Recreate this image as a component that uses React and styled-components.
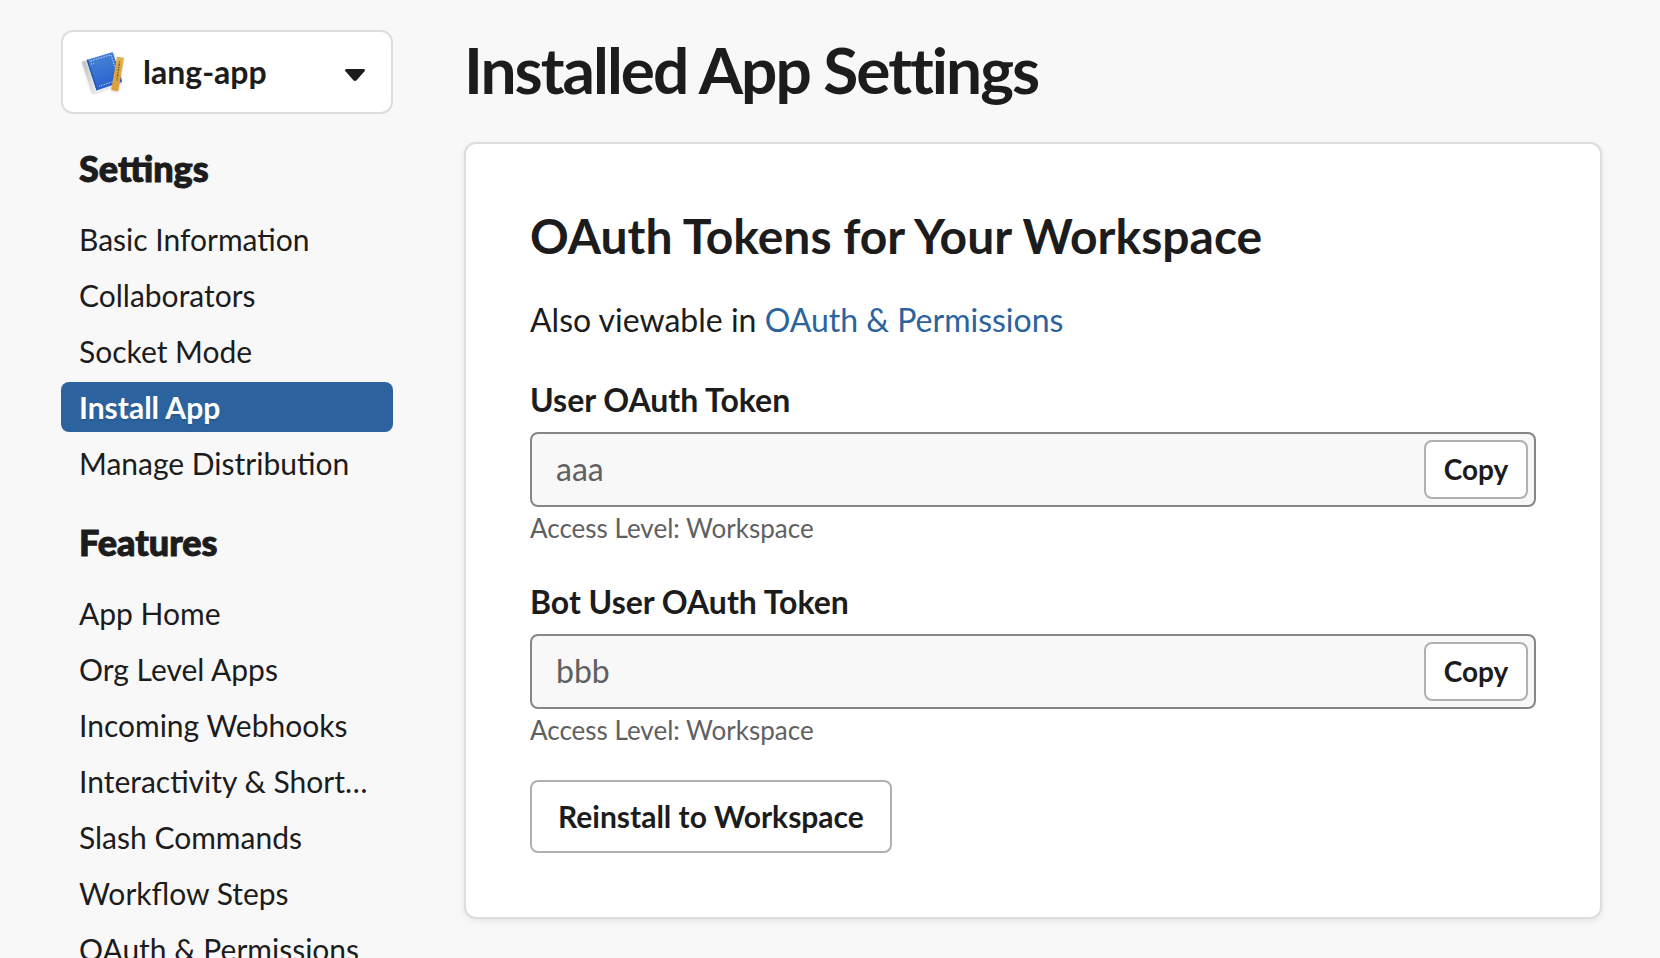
import React from "react";
import styled, { createGlobalStyle, css } from "styled-components";

const GlobalStyle = createGlobalStyle`
  *, *::before, *::after { box-sizing: border-box; }
  html { scrollbar-width: none; }
  body {
    margin: 0;
    background: #f8f8f8;
    color: #1d1c1d;
    font-family: Lato, "Open Sans", sans-serif;
    font-size: 32px;
    line-height: 40px;
    -webkit-font-smoothing: antialiased;
  }
  h1, h2, h3, p, ul { margin: 0; padding: 0; }
  button, input, select { font: inherit; color: inherit; }
`;

const Page = styled.div`
  display: flex;
  align-items: flex-start;
  gap: 71px;
  padding: 30px 58px 30px 61px;
`;

const Sidebar = styled.aside`
  flex: 0 0 332px;
  min-width: 0;
`;

const AppPicker = styled.div`
  position: relative;
  display: flex;
  align-items: center;
  height: 84px;
  padding-left: 18px;
  background: #fff;
  border: 2px solid #ddd;
  border-radius: 12px;
`;

const AppSelect = styled.select`
  flex: 1;
  min-width: 0;
  height: 80px;
  padding: 0 64px 0 18px;
  border: 0;
  background: transparent;
  appearance: none;
  font-weight: 700;
  cursor: pointer;
`;

const Caret = styled.svg`
  position: absolute;
  right: 26px;
  top: 37px;
  width: 20px;
  height: 12px;
  pointer-events: none;
`;

const NavHeading = styled.h3`
  margin: 32px 0 24px;
  padding: 0 18px;
  font-size: 36px;
  font-weight: 900;
  line-height: 44px;
  -webkit-text-stroke: 1px currentColor;
`;

const NavList = styled.ul`
  display: flex;
  flex-direction: column;
  gap: 6px;
  list-style: none;
`;

const NavLink = styled.a`
  display: block;
  padding: 0 18px;
  border-radius: 8px;
  color: inherit;
  font-size: 30px;
  line-height: 50px;
  text-decoration: none;
  white-space: nowrap;
  overflow: hidden;
  text-overflow: ellipsis;
  ${({ $active }) =>
    $active &&
    css`
      background: #2c639e;
      color: #fff;
      font-weight: 700;
      text-shadow: 0 2px 0 rgba(0, 0, 0, 0.1);
    `}
`;

const Main = styled.main`
  flex: 1;
  min-width: 0;
`;

const Title = styled.h1`
  font-size: 64px;
  font-weight: 700;
  line-height: 80px;
  letter-spacing: -2px;
`;

const Card = styled.section`
  margin-top: 32px;
  padding: 64px;
  background: #fff;
  border: 2px solid #ddd;
  border-radius: 12px;
  box-shadow: 0 2px 6px rgba(0, 0, 0, 0.08);
`;

const CardTitle = styled.h2`
  font-size: 48px;
  font-weight: 700;
  line-height: 56px;
`;

const Note = styled.p`
  margin-top: 36px;
`;

const TextLink = styled.a`
  color: #2c639e;
  text-decoration: none;
`;

const Field = styled.div`
  margin-top: ${({ $first }) => ($first ? 40 : 38)}px;
`;

const FieldLabel = styled.label`
  display: block;
  font-weight: 700;
`;

const TokenBox = styled.div`
  display: flex;
  align-items: stretch;
  height: 75px;
  margin-top: 12px;
  padding: 6px;
  background: #f8f8f8;
  border: 2px solid #868686;
  border-radius: 8px;
`;

const TokenInput = styled.input`
  flex: 1;
  min-width: 0;
  padding: 0 18px 2px;
  border: 0;
  outline: 0;
  background: transparent;
  color: #616061;
`;

const Button = styled.button`
  padding: 0 0 2px;
  background: #fff;
  border: 2px solid #b0b0b0;
  border-radius: 8px;
  font-weight: 700;
  cursor: pointer;
`;

const CopyButton = styled(Button)`
  width: 104px;
  font-size: 28px;
`;

const ReinstallButton = styled(Button)`
  display: block;
  height: 73px;
  margin-top: 34px;
  padding: 0 26px 2px;
  font-size: 30px;
`;

const Hint = styled.p`
  margin-top: 5px;
  color: #616061;
  font-size: 26px;
  line-height: 32px;
`;

const BookIcon = () => (
  <svg width="44" height="44" viewBox="0 0 44 44" aria-hidden="true">
    <defs>
      <linearGradient id="cover" x1="0" y1="0" x2="0.3" y2="1">
        <stop offset="0" stopColor="#4a86d8" />
        <stop offset="0.5" stopColor="#3a76d2" />
        <stop offset="1" stopColor="#2a62d0" />
      </linearGradient>
      <linearGradient id="spine" x1="0" y1="0" x2="1" y2="0">
        <stop offset="0" stopColor="#bdbdbd" />
        <stop offset="0.4" stopColor="#f4f4f4" />
        <stop offset="1" stopColor="#d4d4d4" />
      </linearGradient>
      <linearGradient id="ruler" x1="0" y1="0" x2="0" y2="1">
        <stop offset="0" stopColor="#e3b04f" />
        <stop offset="1" stopColor="#dc9f3c" />
      </linearGradient>
      <filter id="soft" x="-20%" y="-20%" width="150%" height="150%">
        <feDropShadow dx="0" dy="1" stdDeviation="1" floodOpacity="0.2" />
      </filter>
    </defs>
    <g filter="url(#soft)">
      <path d="M0.8 11.8 L5 10.4 L15.4 40.6 L41 31.6 L41.2 32.4 L12.6 43 Q11.2 43.2 10.6 41.6 Z" fill="url(#spine)" />
      <path d="M5.6 10 L31 2.2 Q31.8 2.2 32.1 3 L41 30.8 Q41.2 31.6 40.4 31.9 L15.6 40.4 Z" fill="url(#cover)" />
    </g>
    <path d="M5.6 10 L6.8 9.6 L16.6 40 L15.6 40.4 Z" fill="#2152a8" />
    <path d="M9.5 11 L30 4.8 L37.8 29.6 L18 36.4" fill="none" stroke="#d3e3fa" strokeWidth="0.9" strokeDasharray="1.4 1.3" />
    <path d="M9.5 11 L10.8 15 M9.8 14.2 L14 13" fill="none" stroke="#a7c6f2" strokeWidth="0.8" strokeDasharray="1.2 1.2" />
    <g filter="url(#soft)">
      <path d="M36 6.7 L43 7.8 L37.2 41.2 L30.2 40 Z" fill="url(#ruler)" />
    </g>
    <path d="M38.6 11.5 L36 30.5" stroke="#7a571b" strokeWidth="1.3" strokeDasharray="1.2 0.8 2.4 1" fill="none" />
    <path d="M36 15 L34.2 27" stroke="#a4762b" strokeWidth="0.8" strokeDasharray="0.7 1.6" fill="none" />
  </svg>
);

const navSections = [
  {
    heading: "Settings",
    items: ["Basic Information", "Collaborators", "Socket Mode", "Install App", "Manage Distribution"],
  },
  {
    heading: "Features",
    items: [
      "App Home",
      "Org Level Apps",
      "Incoming Webhooks",
      "Interactivity & Shortcuts",
      "Slash Commands",
      "Workflow Steps",
      "OAuth & Permissions",
    ],
  },
];

const tokens = [
  { id: "user-token", label: "User OAuth Token", value: "aaa" },
  { id: "bot-token", label: "Bot User OAuth Token", value: "bbb" },
];

export default function App() {
  return (
    <>
      <GlobalStyle />
      <Page>
        <Sidebar>
          <AppPicker>
            <BookIcon />
            <AppSelect aria-label="App" defaultValue="lang-app">
              <option>lang-app</option>
            </AppSelect>
            <Caret viewBox="0 0 20 12" aria-hidden="true">
              <path
                d="M1.6 0 H18.4 Q19.6 0 19.9 0.9 Q20.1 1.7 19.3 2.5 L11.6 11.2 Q10 12.8 8.4 11.2 L0.7 2.5 Q-0.1 1.7 0.1 0.9 Q0.4 0 1.6 0 Z"
                fill="#1d1c1d"
              />
            </Caret>
          </AppPicker>
          <nav>
            {navSections.map(({ heading, items }) => (
              <React.Fragment key={heading}>
                <NavHeading>{heading}</NavHeading>
                <NavList>
                  {items.map((item) => (
                    <li key={item}>
                      <NavLink
                        href="#"
                        $active={item === "Install App"}
                        aria-current={item === "Install App" ? "page" : undefined}
                      >
                        {item}
                      </NavLink>
                    </li>
                  ))}
                </NavList>
              </React.Fragment>
            ))}
          </nav>
        </Sidebar>
        <Main>
          <Title>Installed App Settings</Title>
          <Card>
            <CardTitle>OAuth Tokens for Your Workspace</CardTitle>
            <Note>
              Also viewable in <TextLink href="#">OAuth &amp; Permissions</TextLink>
            </Note>
            {tokens.map(({ id, label, value }, index) => (
              <Field key={id} $first={index === 0}>
                <FieldLabel htmlFor={id}>{label}</FieldLabel>
                <TokenBox>
                  <TokenInput id={id} type="text" value={value} readOnly />
                  <CopyButton type="button">Copy</CopyButton>
                </TokenBox>
                <Hint>Access Level: Workspace</Hint>
              </Field>
            ))}
            <ReinstallButton type="button">Reinstall to Workspace</ReinstallButton>
          </Card>
        </Main>
      </Page>
    </>
  );
}
